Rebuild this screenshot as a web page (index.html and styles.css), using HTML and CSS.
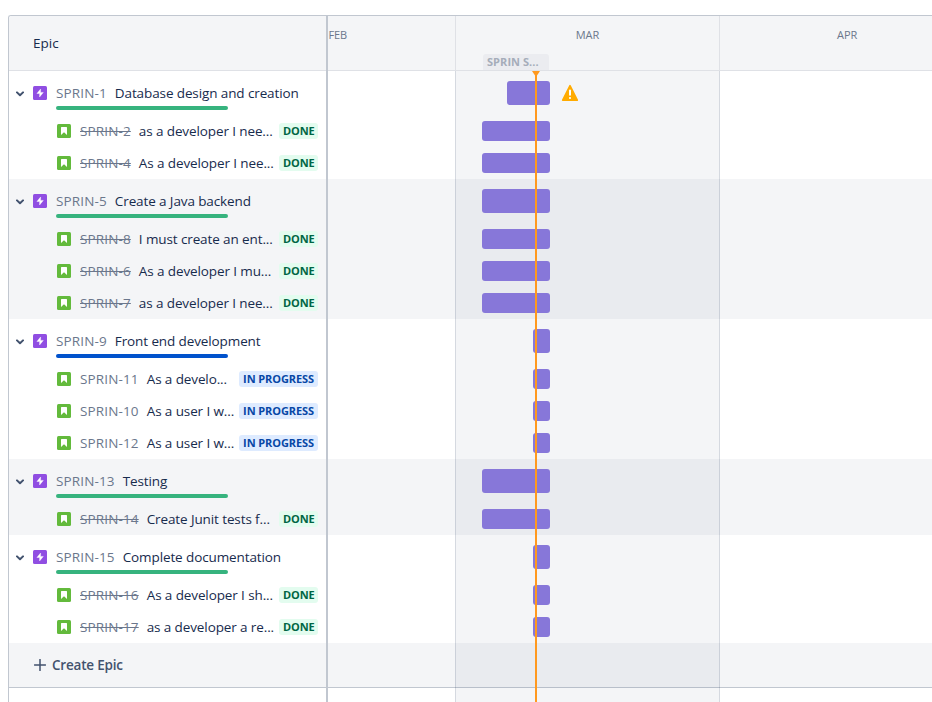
FILE: index.html
```html
<!DOCTYPE html>
<html lang="en">
<head>
<meta charset="utf-8">
<title>Roadmap</title>
<link rel="stylesheet" href="styles.css">
</head>
<body>
<svg class="sprites" width="0" height="0">
  <symbol id="chevron" viewBox="0 0 8 6"><path d="M1 1.4 4 4.3 7 1.4" fill="none" stroke="#42526e" stroke-width="2" stroke-linecap="round" stroke-linejoin="round"/></symbol>
  <symbol id="epic" viewBox="0 0 14 14"><rect width="14" height="14" rx="1.5" fill="#904ee2"/><path d="M7.6 3 3.9 7.5h2.7V11l3.7-4.6H7.6z" fill="#fff" stroke="#fff" stroke-width=".4" stroke-linejoin="round"/></symbol>
  <symbol id="story" viewBox="0 0 14 14"><rect width="14" height="14" rx="1.5" fill="#63ba3c"/><path d="M4.6 3h4.8q.6 0 .6.6V11L7 8.2 4 11V3.6q0-.6.6-.6z" fill="#fff"/></symbol>
</svg>
<main class="roadmap">
  <header class="head">
    <div class="head-epic">Epic</div>
    <div class="head-months">
      <div class="month feb">FEB</div>
      <div class="month mar">MAR<span class="sprint">SPRIN S...</span></div>
      <div class="month apr">APR</div>
    </div>
  </header>
  <div class="body">
    <div class="groups" id="groups"></div>
    <div class="row create">
      <div class="cell"><svg class="plus" width="12" height="12" viewBox="0 0 12 12"><path d="M6 .5v11M.5 6h11" stroke="#42526e" stroke-width="1.5" stroke-linecap="round"/></svg><span>Create Epic</span></div>
    </div>
    <div class="tail"></div>
    <div class="march"></div>
    <div class="today"></div>
  </div>
</main>
<script src="script.js"></script>
</body>
</html>
```
FILE: styles.css
```css
* { box-sizing: border-box; }
body { margin: 0; background: #fff; overflow: hidden; font-family: "Open Sans", "Noto Sans", sans-serif; font-size: 13.5px; color: #172b4d; }
.sprites { position: absolute; }
svg { display: block; flex: none; }
.roadmap { margin: 15px 0 0 8px; height: 687px; border: 1px solid #c1c7d0; border-right: 0; border-bottom: 0; border-top-left-radius: 3px; overflow: hidden; }
.head { display: flex; height: 55px; background: #f4f5f7; border-bottom: 1px solid #dfe1e6; }
.head-epic { width: 319px; height: 55px; padding-left: 24px; line-height: 54px; border-right: 2px solid #c1c7d0; letter-spacing: 0; }
.head-months { flex: 1; display: grid; grid-template-columns: 128px 264px 1fr; }
.month { font-size: 11px; line-height: 16px; padding-top: 11px; color: #6b778c; border-right: 1px solid #dfe1e6; }
.feb { letter-spacing: -.2px; padding-left: .6px; }
.apr { border-right: 0; padding-left: 117px; }
.mar { position: relative; text-align: center; letter-spacing: -.1px; }
.sprint { position: absolute; left: 27px; top: 38px; width: 66px; height: 16px; padding-left: 4px; border-radius: 3px 3px 0 0; background: #ebecf0; color: #a5adba; font-weight: 700; text-align: left; white-space: nowrap; letter-spacing: .05px; }
.body { position: relative; height: 631px; }
.group:nth-child(even) { background: #f4f5f7; }
.row { display: flex; height: 32px; }
.row.epic { height: 44px; }
.cell { position: relative; width: 319px; border-right: 2px solid #c1c7d0; padding: 0 8px 0 48px; display: flex; align-items: center; white-space: nowrap; }
.epic .cell { padding-left: 7px; }
.chevron { margin: 2px 9px 0 0; }
.key { margin-left: 9px; color: #6b778c; letter-spacing: .14px; }
.done .key { text-decoration: line-through; }
.title { margin-left: 8px; letter-spacing: -.11px; }
.progress { position: absolute; left: 47px; top: 35px; width: 172px; height: 4px; border-radius: 2px; background: #36b37e; }
.progress.blue { background: #0052cc; }
.tag { margin-left: auto; height: 16px; line-height: 16px; padding: 0 4px; border-radius: 3px; font-size: 11px; font-weight: 700; text-align: center; letter-spacing: -.1px; }
.tag.green { width: 39px; background: #e3fcef; color: #006644; }
.tag.blue { width: 79px; background: #deebff; color: #0747a6; }
.track { display: flex; align-items: center; position: relative; z-index: 2; }
.bar { height: 20px; border-radius: 3px; background: #8777d9; }
.epic .bar { height: 24px; }
.bar.full { margin-left: 154px; width: 68px; }
.bar.late { margin-left: 179px; width: 43px; }
.bar.short { margin-left: 205px; width: 17px; }
.warning { margin-left: 11px; }
.row.create { height: 45px; background: #f4f5f7; border-bottom: 1px solid #c1c7d0; }
.create .cell { padding-left: 25px; color: #42526e; font-weight: 600; letter-spacing: -.2px; }
.plus { margin-right: 6px; }
.tail { width: 319px; height: 14px; border-right: 2px solid #c1c7d0; }
.march { position: absolute; z-index: 1; left: 446px; top: 0; width: 265px; height: 100%; background: rgba(9, 30, 66, .043); border: solid rgba(9, 30, 66, .13); border-width: 0 1px; }
.today { position: absolute; z-index: 3; left: 526px; top: 0; width: 2px; height: 100%; background: #ff991f; }
.today::before { content: ""; position: absolute; left: -3px; top: 0; border: solid transparent; border-width: 6px 4px 0; border-top-color: #ff991f; }
```
FILE: script.js
```js
const groups = [
  { key: "SPRIN-1", title: "Database design and creation", bar: "late", warn: true, items: [
    ["SPRIN-2", "as a developer I nee...", true, "full"],
    ["SPRIN-4", "As a developer I nee...", true, "full"]] },
  { key: "SPRIN-5", title: "Create a Java backend", bar: "full", items: [
    ["SPRIN-8", "I must create an ent...", true, "full"],
    ["SPRIN-6", "As a developer I mu...", true, "full"],
    ["SPRIN-7", "as a developer I nee...", true, "full"]] },
  { key: "SPRIN-9", title: "Front end development", bar: "short", blue: true, items: [
    ["SPRIN-11", "As a develo...", false, "short"],
    ["SPRIN-10", "As a user I w...", false, "short"],
    ["SPRIN-12", "As a user I w...", false, "short"]] },
  { key: "SPRIN-13", title: "Testing", bar: "full", items: [
    ["SPRIN-14", "Create Junit tests f...", true, "full"]] },
  { key: "SPRIN-15", title: "Complete documentation", bar: "short", items: [
    ["SPRIN-16", "As a developer I sh...", true, "short"],
    ["SPRIN-17", "as a developer a re...", true, "short"]] }
];

const warning = `<svg class="warning" width="18" height="18" viewBox="0 0 18 18"><path d="M9 1.7 16.3 16.2H1.7z" fill="#ffab00" stroke="#ffab00" stroke-width="1.6" stroke-linejoin="round"/><path d="M9 6.5v4.3" stroke="#fff" stroke-width="2" stroke-linecap="round"/><circle cx="9" cy="14" r="1.1" fill="#fff"/></svg>`;
const icon = name => `<svg width="14" height="14"><use href="#${name}"/></svg>`;

document.getElementById("groups").innerHTML = groups.map(g => `
  <section class="group">
    <div class="row epic">
      <div class="cell">
        <svg class="chevron" width="8" height="6"><use href="#chevron"/></svg>${icon("epic")}
        <span class="key">${g.key}</span><span class="title">${g.title}</span>
        <div class="progress ${g.blue ? "blue" : ""}"></div>
      </div>
      <div class="track"><div class="bar ${g.bar}"></div>${g.warn ? warning : ""}</div>
    </div>
    ${g.items.map(([key, title, done, bar]) => `
    <div class="row ${done ? "done" : ""}">
      <div class="cell">${icon("story")}<span class="key">${key}</span><span class="title">${title}</span><span class="tag ${done ? "green" : "blue"}">${done ? "DONE" : "IN PROGRESS"}</span></div>
      <div class="track"><div class="bar ${bar}"></div></div>
    </div>`).join("")}
  </section>`).join("");
```
